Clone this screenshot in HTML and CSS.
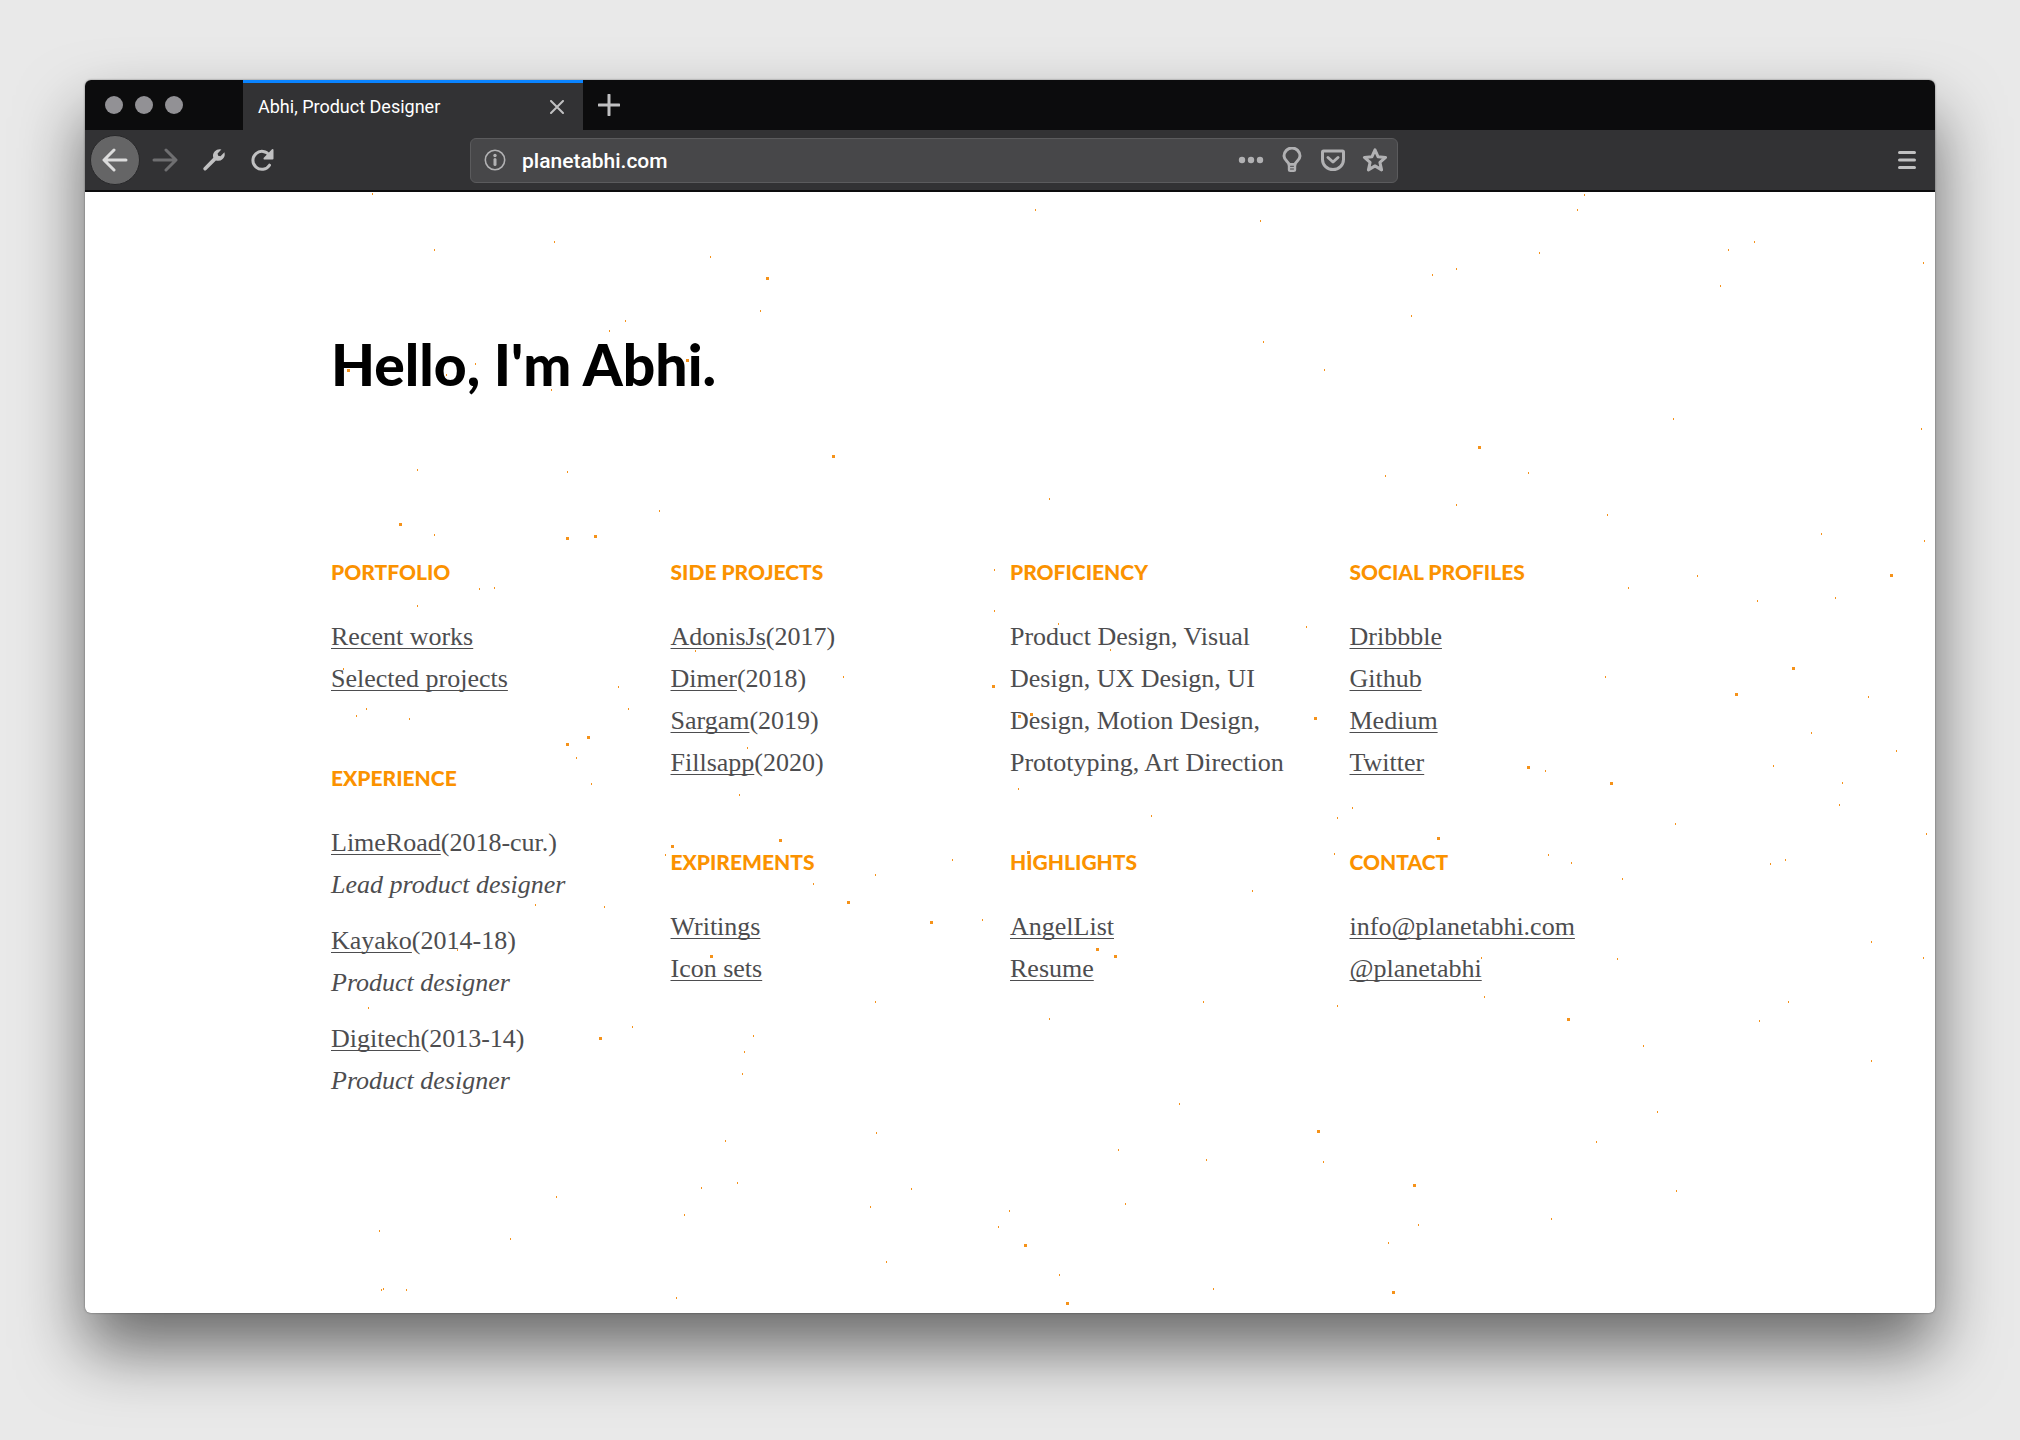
FILE: index.html
```html
<!DOCTYPE html>
<html lang="en">
<head>
<meta charset="utf-8">
<title>Abhi, Product Designer</title>
<link rel="stylesheet" href="styles.css">
</head>
<body>
<div class="window">
  <header class="tabbar">
    <div class="lights"><span class="light"></span><span class="light"></span><span class="light"></span></div>
    <div class="tab">
      <span class="tab-title">Abhi, Product Designer</span>
      <button class="icon-btn" aria-label="Close tab"><svg width="14" height="14" viewBox="0 0 14 14"><path d="M1 1l12 12M13 1L1 13" stroke-width="2"/></svg></button>
    </div>
    <button class="icon-btn new-tab" aria-label="New tab"><svg width="22" height="22" viewBox="0 0 22 22"><path d="M11 1v20M1 11h20" stroke-width="3"/></svg></button>
  </header>
  <nav class="toolbar" aria-label="Browser">
    <div class="nav-buttons">
      <button class="icon-btn back" aria-label="Back"><svg width="26" height="24" viewBox="0 0 26 24"><path d="M24 12H3M12 2L2 12l10 10" stroke-width="3"/></svg></button>
      <button class="icon-btn forward" aria-label="Forward"><svg width="26" height="24" viewBox="0 0 26 24"><path d="M2 12h21M14 2l10 10-10 10" stroke-width="3"/></svg></button>
      <button class="icon-btn" aria-label="Developer tools"><svg width="24" height="24" viewBox="0 0 24 24"><path class="solid" d="M22.4 4.2L18.500 8.300l-2.400-.5-.5-2.300L19.400 1.500A6.600 6.600 0 0 0 11.300 9.800L1.800 19.500a1.700 1.700 0 0 0 2.500 2.500l9.600-9.600A6.600 6.600 0 0 0 22.400 4.200z"/></svg></button>
      <button class="icon-btn" aria-label="Reload"><svg width="24" height="24" viewBox="0 0 24 24"><path d="M19.500 17.200A9 9 0 1 1 19.500 7.500" stroke-width="3"/><path class="solid" d="M22 1.200a1 1 0 0 1 1.500.8v8.500a1 1 0 0 1-1 1h-8a1 1 0 0 1-.7-1.700z"/></svg></button>
    </div>
    <div class="urlbar">
      <svg width="22" height="22" viewBox="0 0 22 22"><circle cx="11" cy="11" r="9.700" stroke-width="1.600"/><path d="M11 10.500v5" stroke-width="3"/><circle class="solid" cx="11" cy="6.500" r="1.700"/></svg>
      <input class="url" type="text" value="planetabhi.com" aria-label="Address">
      <button class="icon-btn" aria-label="Page actions"><svg width="26" height="24" viewBox="0 0 26 24"><circle class="solid" cx="4" cy="12" r="3.200"/><circle class="solid" cx="13" cy="12" r="3.200"/><circle class="solid" cx="22" cy="12" r="3.200"/></svg></button>
      <button class="icon-btn" aria-label="Tips"><svg width="24" height="26" viewBox="0 0 24 26"><path d="M9 17.500c0-2.500-5-4-5-8.500a8 8 0 0 1 16 0c0 4.500-5 6-5 8.500z" stroke-width="3"/><path class="solid" d="M7.800 17h8.400v5.500a2.500 2.500 0 0 1-2.500 2.500h-3.400a2.500 2.500 0 0 1-2.500-2.500z"/><path class="slots" d="M10.500 19.300h3M10.500 22h3" stroke-width="1"/></svg></button>
      <button class="icon-btn" aria-label="Save to Pocket"><svg width="26" height="24" viewBox="0 0 26 24"><path d="M3.500 3h19a1 1 0 0 1 1 1v7.500a10.500 10 0 0 1-21 0V4a1 1 0 0 1 1-1z" stroke-width="3"/><path d="M8 9.500l5 4.500 5-4.500" stroke-width="3"/></svg></button>
      <button class="icon-btn" aria-label="Bookmark"><svg width="26" height="26" viewBox="0 0 26 26"><path d="M13 2.800l3 6.900 7.600.7-5.700 5 1.700 7.500-6.600-4-6.600 4 1.700-7.500-5.700-5 7.600-.7z" stroke-width="3"/></svg></button>
    </div>
    <div class="menu"><button class="icon-btn" aria-label="Menu"><svg width="18" height="20" viewBox="0 0 18 20"><path d="M1.500 2.500h15M1.500 10h15M1.500 17.500h15" stroke-width="3"/></svg></button></div>
  </nav>
  <main class="page">
    <div class="content">
      <h1>Hello, I'm Abhi.</h1>
      <div class="columns">
        <div class="column">
          <section><h2>PORTFOLIO</h2><ul><li><a href="#">Recent works</a></li><li><a href="#">Selected projects</a></li></ul></section>
          <section><h2>EXPERIENCE</h2><ul class="jobs"><li><a href="#">LimeRoad</a>(2018-cur.)<br><em>Lead product designer</em></li><li><a href="#">Kayako</a>(2014-18)<br><em>Product designer</em></li><li><a href="#">Digitech</a>(2013-14)<br><em>Product designer</em></li></ul></section>
        </div>
        <div class="column">
          <section><h2>SIDE PROJECTS</h2><ul><li><a href="#">AdonisJs</a>(2017)</li><li><a href="#">Dimer</a>(2018)</li><li><a href="#">Sargam</a>(2019)</li><li><a href="#">Fillsapp</a>(2020)</li></ul></section>
          <section><h2>EXPIREMENTS</h2><ul><li><a href="#">Writings</a></li><li><a href="#">Icon sets</a></li></ul></section>
        </div>
        <div class="column">
          <section><h2>PROFICIENCY</h2><p>Product Design, Visual<br>Design, UX Design, UI<br>Design, Motion Design,<br>Prototyping, Art Direction</p></section>
          <section><h2>HIGHLIGHTS</h2><ul><li><a href="#">AngelList</a></li><li><a href="#">Resume</a></li></ul></section>
        </div>
        <div class="column">
          <section><h2>SOCIAL PROFILES</h2><ul><li><a href="#">Dribbble</a></li><li><a href="#">Github</a></li><li><a href="#">Medium</a></li><li><a href="#">Twitter</a></li></ul></section>
          <section><h2>CONTACT</h2><ul><li><a href="#">info@planetabhi.com</a></li><li><a href="#">@planetabhi</a></li></ul></section>
        </div>
      </div>
    </div>
    <svg class="particles" aria-hidden="true">
      <path class="small" d="M287 2h1M469 50h1M349 58h1M625 65h1M675 119h1M540 129h1M524 139h1M390 172h1M361 183h1M466 198h1M332 278h1M482 280h1M574 319h1M349 343h1M394 397h1M409 396h1M332 414h1M909 378h1M909 419h1M610 459h1M258 477h1M758 485h1M533 495h1M281 517h1M271 524h1M324 527h1M543 517h1M662 556h1
      M950 18h1M1175 29h1M1499 3h1M1492 18h1M1669 50h1M1643 58h1M1454 61h1M1838 71h1M1371 77h1M1347 83h1M1635 94h1M1326 124h1M1178 150h1M1239 178h1M1588 227h1M1836 237h1M1300 284h1M1443 281h1M964 307h1M1371 313h1M1522 323h1M1736 342h1M1839 349h1M1612 384h1M1543 396h1M1750 406h1M1672 409h1M973 432h1M1221 435h1M1025 458h1M1520 485h1M1783 505h1M1726 541h1
      M491 566h1M506 592h1M654 603h1M580 663h1M867 668h1M790 683h1M728 692h1M450 713h1M519 715h1M897 728h1M372 758h1M283 816h1M790 810h1M547 835h1M668 844h1M659 860h1M657 882h1M791 941h1M640 949h1M652 991h1M616 996h1M826 997h1M471 1005h1M785 1015h1M599 1023h1M924 1019h1M913 1035h1M294 1039h1M425 1047h1M801 1070h1M298 1097h1M296 1098h1M321 1098h1M591 1106h1
      M1811 559h1M1688 574h1M1460 579h1M1757 591h1M933 597h1M1754 613h1M1267 616h1M1066 624h1M1252 626h1M1590 632h1M1841 642h1M1249 662h1M1463 663h1M1486 671h1M1700 668h1M1685 672h1M1537 687h1M1167 699h1M1786 750h1M1838 766h1M1396 766h1M1532 767h1M1399 805h1M1118 810h1M1252 814h1M1703 810h1M964 827h1M1674 829h1M1558 854h1M1786 869h1M1094 912h1M1572 920h1M1511 950h1M1033 958h1M1121 968h1M1238 970h1M1591 999h1M1040 1012h1M1466 1027h1M1333 1033h1M1303 1051h1M974 1083h1M1128 1097h1"/>
      <path class="large" d="M681 86h3M262 178h3M601 168h3M747 264h3M314 332h3M481 346h3M509 344h3M907 494h3M502 545h3M481 552h3M1393 255h3M1805 383h3M1707 476h3M1650 502h3M945 522h3M933 524h3M1229 526h3M694 648h3M586 654h3M762 710h3M845 730h3M625 764h3M514 846h3M1442 575h3M1525 591h3M1352 646h3M942 660h3M1011 757h3M1029 764h3M1482 827h3M1232 939h3M1328 993h3M939 1053h3M1307 1100h3M981 1111h3"/>
    </svg>
  </main>
</div>
</body>
</html>
```
FILE: styles.css
```css
* { box-sizing: border-box; }

body {
  margin: 0;
  min-height: 100vh;
  padding: 80px 85px 127px;
  display: flex;
  background: #e9e9e9;
}

.window {
  flex: 1;
  min-width: 0;
  display: flex;
  flex-direction: column;
  border-radius: 6px;
  overflow: hidden;
  background: #fff;
  box-shadow: 0 0 2px rgba(0, 0, 0, .5), 0 36px 66px rgba(0, 0, 0, .55);
}

/* Browser chrome */
.tabbar {
  display: flex;
  height: 50px;
  background: #0c0c0d;
}

.lights {
  display: flex;
  align-items: center;
  gap: 12px;
  width: 158px;
  padding-left: 20px;
}

.light {
  width: 18px;
  height: 18px;
  border-radius: 50%;
  background: #929195;
}

.tab {
  display: flex;
  align-items: center;
  justify-content: space-between;
  width: 340px;
  padding: 0 19px 0 15px;
  background: #323234;
  border-top: 3px solid #0a84ff;
}

.tab-title {
  color: #fff;
  font: 18px/24px Roboto, "Liberation Sans", sans-serif;
}

.icon-btn {
  display: flex;
  align-items: center;
  justify-content: center;
  padding: 0;
  border: 0;
  background: none;
  color: #c0c0c1;
}

.new-tab { width: 51px; }

svg {
  flex: none;
  fill: none;
  stroke: currentColor;
  stroke-linecap: round;
  stroke-linejoin: round;
}

.solid { fill: currentColor; stroke: none; }
.slots { stroke: #474749; }

.toolbar {
  display: grid;
  grid-template-columns: 1fr minmax(0, 928px) 1fr;
  align-items: center;
  height: 62px;
  background: #323234;
  border-bottom: 2px solid #0c0c0d;
}

.nav-buttons {
  display: flex;
  align-items: center;
  gap: 24px;
  padding-left: 5px;
}

.back {
  width: 50px;
  height: 50px;
  border-radius: 50%;
  background: #656566;
  border: 1px solid #28282a;
  color: #dcdcdc;
  margin-right: -12px;
}

.forward { color: #6f6f71; }

.urlbar {
  grid-column: 2;
  display: flex;
  align-items: center;
  gap: 16px;
  height: 45px;
  margin-left: -76px;
  margin-right: 76px;
  padding: 0 9px 0 13px;
  background: #474749;
  border: 1px solid #5b5b5d;
  border-radius: 6px;
  color: #b1b1b3;
}

.urlbar .icon-btn { color: #b1b1b3; }

.url {
  flex: 1;
  min-width: 0;
  padding: 2px 0 0;
  border: 0;
  background: none;
  color: #fff;
  font: 500 21px/28px Roboto, "Liberation Sans", sans-serif;
}

.menu {
  display: flex;
  justify-content: flex-end;
  padding-right: 19px;
}

/* Portfolio page */
.page {
  position: relative;
  flex: 1;
  padding: 140px 32px 160px;
  color: #4d4d4f;
  font: 26px/42px "Liberation Serif", serif;
}

.content {
  max-width: 1358px;
  margin: 0 auto;
}

h1 {
  margin: 0 0 161px;
  color: #000;
  font: 900 57px/64px Lato, sans-serif;
}

.columns {
  display: grid;
  grid-template-columns: repeat(4, minmax(0, 1fr));
}

.column {
  display: flex;
  flex-direction: column;
  gap: 63px;
}

h2 {
  margin: 0 0 29px;
  color: #fb9200;
  font: 900 21px/30px Lato, sans-serif;
}

p, ul {
  margin: 0;
  padding: 0;
  list-style: none;
}

.jobs {
  display: grid;
  gap: 14px;
}

a {
  color: inherit;
  text-decoration: underline 1px;
  text-underline-offset: 3px;
  text-decoration-skip-ink: none;
}

.particles {
  position: absolute;
  inset: 0;
  width: 100%;
  height: 100%;
  pointer-events: none;
  color: #f5921a;
  stroke-linecap: butt;
  shape-rendering: crispEdges;
}

.small { stroke-width: 2; }
.large { stroke-width: 3; }
```
